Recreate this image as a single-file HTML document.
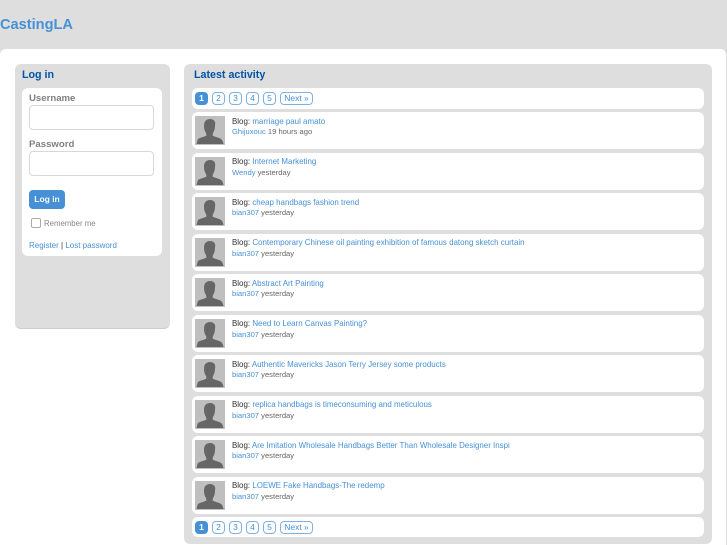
<!DOCTYPE html>
<html><head><meta charset="utf-8"><style>
html,body{margin:0;padding:0;width:727px;height:545px;overflow:hidden;background:#dedede;font-family:"Liberation Sans",sans-serif}
div,span{position:absolute;white-space:nowrap;box-sizing:border-box}
#w{left:0;top:0;width:727px;height:545px;filter:blur(.35px)}
.wh{background:#fff;border-radius:6px}
.pn{top:4px;height:13px;border:1px solid #7fb0e2;border-radius:4px;color:#4690d6;font-size:8.5px;line-height:11px;text-align:center;width:13px}
.it{left:192px;width:512px;height:37px;background:#fff;border-radius:6px}
.av{position:absolute;left:3px;top:4px;width:30px;height:29px}
.t{left:40px;top:3.500px;font-size:7.95px;color:#333;line-height:11px}
.m{left:40px;top:14px;font-size:7.6px;color:#666;line-height:11px}
.t a,.m a{color:#4690d6;text-decoration:none}
.lab{left:29px;font-size:9.6px;font-weight:bold;color:#808080;line-height:12px}
.inp{left:29px;width:125px;height:25px;background:#fff;border:1px solid #d8d8d8;border-radius:4px}
</style></head><body>
<div id="w">
<div style="left:0;top:17px;font-size:14.6px;font-weight:bold;color:#4690d6;line-height:17px">CastingLA</div>
<div style="left:0;top:49px;width:727px;height:496px;background:#fff;border-radius:6px 6px 0 0;border-right:1px solid #ddd"></div>

<div style="left:15px;top:64px;width:155px;height:265px;background:#dedede;border-radius:6px;border-bottom:1px solid #ccc"></div>
<div style="left:22px;top:68px;font-size:10.7px;font-weight:bold;color:#0054a7;line-height:14px">Log in</div>
<div class="wh" style="left:22px;top:88px;width:140px;height:168px"></div>
<div class="lab" style="top:93px">Username</div>
<div class="inp" style="top:105px"></div>
<div class="lab" style="top:139px">Password</div>
<div class="inp" style="top:151px"></div>
<div style="left:29px;top:190px;width:36px;height:19px;background:#4690d6;border-radius:4px;color:#fff;font-size:8.5px;font-weight:bold;line-height:18px;text-align:center">Log in</div>
<div style="left:31px;top:218px;width:10px;height:10px;background:#fff;border:1px solid #aaa;border-radius:2px"></div>
<div style="left:44px;top:218px;font-size:7.8px;color:#888;line-height:11px">Remember me</div>
<div style="left:29px;top:240px;font-size:8px;color:#333;line-height:12px"><a style="color:#4690d6;text-decoration:none">Register</a> | <a style="color:#4690d6;text-decoration:none">Lost password</a></div>

<div style="left:184px;top:64px;width:528px;height:480px;background:#dedede;border-radius:6px"></div>
<div style="left:194px;top:68px;font-size:10.7px;font-weight:bold;color:#0054a7;line-height:14px">Latest activity</div>

<div class="wh" style="left:192px;top:88px;width:512px;height:20.500px">
<div class="pn" style="left:3px;background:#4690d6;border-color:#4690d6;color:#fff;font-weight:bold">1</div>
<div class="pn" style="left:20px">2</div>
<div class="pn" style="left:37px">3</div>
<div class="pn" style="left:54px">4</div>
<div class="pn" style="left:71px">5</div>
<div class="pn" style="left:88px;width:33px">Next »</div>
</div>

<svg width="0" height="0" style="position:absolute"><defs><symbol id="u" viewBox="0 0 30 29"><rect width="30" height="29" fill="#bfbfbf"/><path d="M15 3c-3.800 0-6 2.500-6 6.500 0 3 .6 5.500 2 7.500l.5 2.500c-2.500 1.500-6.500 2-8.500 3.500C2.500 24 2 26 1.500 28h27c-.5-2-1-4-2.500-5-2-1.500-6-2-8.500-3.500l.5-2.500c1.400-2 2-4.500 2-7.500C21 5.500 18.800 3 15 3z" fill="#666"/></symbol></defs></svg>

<div class="it" style="top:112px"><svg class="av" width="30" height="29"><use href="#u"/></svg><div class="t">Blog: <a>marriage paul amato</a></div><div class="m"><a>Ghijuxouc</a> 19 hours ago</div></div>
<div class="it" style="top:152.500px"><svg class="av" width="30" height="29"><use href="#u"/></svg><div class="t">Blog: <a>Internet Marketing</a></div><div class="m"><a>Wendy</a> yesterday</div></div>
<div class="it" style="top:193px"><svg class="av" width="30" height="29"><use href="#u"/></svg><div class="t">Blog: <a>cheap handbags fashion trend</a></div><div class="m"><a>bian307</a> yesterday</div></div>
<div class="it" style="top:233.500px"><svg class="av" width="30" height="29"><use href="#u"/></svg><div class="t">Blog: <a>Contemporary Chinese oil painting exhibition of famous datong sketch curtain</a></div><div class="m"><a>bian307</a> yesterday</div></div>
<div class="it" style="top:274px"><svg class="av" width="30" height="29"><use href="#u"/></svg><div class="t">Blog: <a>Abstract Art Painting</a></div><div class="m"><a>bian307</a> yesterday</div></div>
<div class="it" style="top:314.500px"><svg class="av" width="30" height="29"><use href="#u"/></svg><div class="t">Blog: <a>Need to Learn Canvas Painting?</a></div><div class="m"><a>bian307</a> yesterday</div></div>
<div class="it" style="top:355px"><svg class="av" width="30" height="29"><use href="#u"/></svg><div class="t">Blog: <a>Authentic Mavericks Jason Terry Jersey some products</a></div><div class="m"><a>bian307</a> yesterday</div></div>
<div class="it" style="top:395.500px"><svg class="av" width="30" height="29"><use href="#u"/></svg><div class="t">Blog: <a>replica handbags is timeconsuming and meticulous</a></div><div class="m"><a>bian307</a> yesterday</div></div>
<div class="it" style="top:436px"><svg class="av" width="30" height="29"><use href="#u"/></svg><div class="t">Blog: <a>Are Imitation Wholesale Handbags Better Than Wholesale Designer Inspi</a></div><div class="m"><a>bian307</a> yesterday</div></div>
<div class="it" style="top:476.500px"><svg class="av" width="30" height="29"><use href="#u"/></svg><div class="t">Blog: <a>LOEWE Fake Handbags-The redemp</a></div><div class="m"><a>bian307</a> yesterday</div></div>

<div class="wh" style="left:192px;top:516.500px;width:512px;height:20.500px">
<div class="pn" style="left:3px;background:#4690d6;border-color:#4690d6;color:#fff;font-weight:bold">1</div>
<div class="pn" style="left:20px">2</div>
<div class="pn" style="left:37px">3</div>
<div class="pn" style="left:54px">4</div>
<div class="pn" style="left:71px">5</div>
<div class="pn" style="left:88px;width:33px">Next »</div>
</div>
</div>
</body></html>
